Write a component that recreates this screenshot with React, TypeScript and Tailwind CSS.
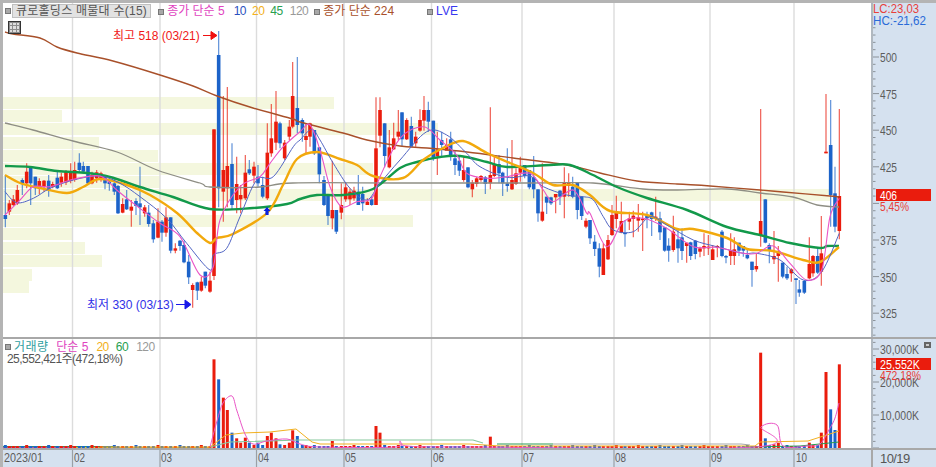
import React from "react";

type C = [number, "R" | "B", number, number, number, number];
type Candle = { x: number; up: boolean; top: number; bot: number; hi: number; lo: number };

const A: C[] = [
  [16,"B",285,297,165,322],[28,"R",250,275,240,285],[40,"R",238,255,225,258],[52,"R",210,250,195,255],[67,"B",180,190,175,225],
  [80,"R",155,190,130,205],[92,"B",140,190,140,255],[106,"B",170,205,170,225],[118,"R",183,207,175,222],[132,"R",182,200,180,215],
  [146,"B",182,210,165,230],[158,"R",192,200,185,205],[172,"B",173,205,150,207],[184,"R",170,188,158,200],[198,"R",153,187,150,195],
  [212,"R",155,183,130,190],[224,"R",150,180,125,185],[238,"B",128,150,100,155],[250,"B",138,155,125,160],[264,"B",138,190,138,192],
  [276,"R",165,190,155,193],[290,"R",157,175,150,188],[303,"R",160,180,155,185],[315,"B",168,190,165,208],[328,"B",185,192,170,212],
  [343,"B",190,215,175,225],[354,"B",198,280,195,282],[368,"R",252,278,235,280],[380,"B",238,268,210,270],[394,"R",260,272,240,320],
  [408,"B",243,258,235,285],[420,"B",250,262,140,315],[434,"R",262,280,255,290],[446,"B",278,312,255,320],[460,"B",310,358,300,368],
  [474,"R",305,353,265,355],[486,"B",305,338,300,365],[498,"R",292,338,262,350],[512,"B",292,392,292,400],[526,"R",385,392,370,400],
  [540,"B",362,378,360,392],[552,"B",375,427,362,430],[566,"B",425,472,405,492],[578,"R",495,510,490,563],[592,"B",487,512,485,540],
  [604,"R",485,512,470,515],[616,"B",455,497,455,505],[630,"R",482,515,455,518],[642,"R",28,468,28,480],[656,"B",-195,205,-267,262],
  [670,"R",150,215,-72,305],[682,"R",138,205,-99,262],[696,"B",132,255,70,268],[710,"R",192,240,110,280],[722,"R",225,238,195,280],
  [736,"R",158,235,105,240],[748,"B",148,160,120,165],[762,"R",140,167,125,190],[774,"B",170,190,135,200],[788,"B",195,230,170,235],
  [802,"R",98,235,10,240],[814,"R",55,100,-48,110],[828,"R",5,68,-87,90],[840,"B",10,70,5,85],[854,"R",68,115,60,120],
  [868,"R",20,50,0,60],[878,"R",-72,20,-174,25],[892,"B",-36,15,-189,40],
];
const B: C[] = [
  [7,"B",90,130,85,155],[18,"R",138,150,100,190],[30,"R",100,140,98,170],[43,"B",120,190,120,195],[58,"B",172,253,172,280],
  [72,"B",270,345,258,348],[84,"B",318,378,318,405],[97,"R",360,385,212,418],[109,"B",360,425,360,432],[124,"R",345,368,280,388],
  [137,"R",292,328,278,335],[150,"R",305,328,295,345],[162,"R",302,325,290,332],[175,"B",305,345,255,345],[188,"B",312,340,290,362],
  [202,"R",335,345,325,345],[215,"B",328,345,320,347],[228,"R",175,345,22,345],[240,"R",60,137,22,172],[254,"B",100,198,100,232],
  [268,"R",172,232,120,235],[281,"R",145,178,98,180],[295,"R",125,140,60,150],[306,"B",67,148,67,170],[320,"R",90,148,85,150],
  [334,"B",108,170,80,170],[347,"R",140,160,125,170],[360,"R",90,122,58,125],[372,"R",60,92,18,122],[385,"B",60,95,35,125],
  [400,"B",92,202,92,212],[412,"R",178,198,125,255],[425,"B",150,165,125,200],[440,"R",165,182,145,180],[452,"B",148,195,125,212],
  [465,"B",205,225,180,255],[478,"B",212,242,200,258],[491,"R",240,270,200,275],[504,"B",232,292,232,295],[517,"R",278,298,270,322],
  [530,"R",265,282,260,290],[543,"R",258,270,255,275],[556,"B",262,282,258,312],[571,"R",255,280,52,298],[583,"R",222,258,200,262],
  [597,"B",222,250,195,280],[608,"B",248,280,245,318],[622,"B",280,288,175,305],[636,"R",270,298,150,300],[648,"R",250,282,235,285],
  [661,"R",230,248,200,275],[674,"B",225,258,225,265],[688,"B",240,292,240,298],[701,"B",262,298,198,325],[714,"B",298,370,298,395],
  [727,"R",365,392,220,395],[740,"B",320,338,320,372],[753,"B",322,340,320,345],[767,"R",312,322,312,370],[780,"B",302,320,300,345],
  [793,"R",278,320,232,385],[806,"R",278,288,250,320],[818,"B",290,320,260,325],[832,"B",278,360,278,388],[845,"B",320,378,320,390],
  [858,"R",392,410,385,415],
];
const D9: C[] = [
  [90,"B",210,265,210,282],[104,"B",275,297,255,318],[118,"B",295,350,280,382],[130,"R",295,375,280,375],[144,"R",270,328,255,330],
  [156,"R",195,255,165,258],[169,"R",187,207,137,235],[184,"R",213,248,155,250],[195,"B",248,252,210,290],[208,"R",205,215,185,240],
  [220,"R",197,207,182,262],[235,"R",202,212,162,245],[248,"R",206,210,185,303],[261,"B",197,205,185,235],[275,"B",187,207,185,258],
  [287,"R",200,205,140,213],[300,"B",205,247,185,270],[314,"B",232,302,232,305],[326,"B",287,302,265,335],[340,"R",245,300,197,305],
  [354,"B",268,295,240,338],[366,"B",262,303,235,330],[380,"R",278,288,278,338],[392,"B",277,318,275,330],[406,"B",272,312,270,328],
  [420,"R",295,305,290,322],[432,"R",288,295,250,318],[445,"R",290,295,255,315],[458,"R",298,330,285,330],[472,"R",288,292,285,322],
  [486,"B",245,318,240,322],[498,"B",318,320,315,340],[512,"R",300,318,250,345],[523,"R",298,318,262,345],[537,"B",278,302,278,318],
  [550,"B",288,302,288,320],[562,"B",315,325,300,328],[576,"B",335,360,335,410],[589,"R",348,358,310,365],
];
const Z4: C[] = [
  [62,"R",303,345,-33,380],[76,"B",238,368,238,370],[88,"B",375,393,370,430],[102,"R",408,418,333,432],[115,"R",393,408,378,485],
  [128,"B",428,470,428,475],[141,"B",462,475,440,480],[154,"R",448,460,445,485],[168,"B",475,480,475,552],[178,"B",508,518,480,530],
  [193,"B",483,518,480,522],[208,"R",432,475,352,478],[219,"R",408,460,405,470],[233,"B",408,458,385,462],[244,"R",400,455,288,497],
  [258,"R",95,100,-78,100],[272,"B",75,225,-60,320],[285,"B",220,320,140,337],[298,"R",228,333,-33,358],
];

const conv = (rows: C[], ox: number, oy: number): Candle[] =>
  rows.map(([x, c, t, b, h, l]) => ({ x: ox + x / 3, up: c === "R", top: oy + t / 3, bot: oy + b / 3, hi: oy + h / 3, lo: oy + l / 3 }));

const candles: Candle[] = [...conv(A, 0, 120), ...conv(B, 300, 90), ...conv(D9, 560, 150), ...conv(Z4, 740, 120)];

type P = [number, number];
const zp = (pts: P[], ox: number, oy: number): P[] => pts.map(([x, y]) => [ox + x / 3, oy + y / 3]);
const line = (p: P[]) => p.map(([x, y]) => `${x.toFixed(1)},${y.toFixed(1)}`).join(" ");
const smooth = (p: P[]) => {
  let d = `M${p[0][0].toFixed(1)} ${p[0][1].toFixed(1)}`;
  for (let i = 0; i < p.length - 1; i++) {
    const p0 = p[Math.max(i - 1, 0)], p1 = p[i], p2 = p[i + 1], p3 = p[Math.min(i + 2, p.length - 1)];
    const c1x = p1[0] + (p2[0] - p0[0]) / 6, c1y = p1[1] + (p2[1] - p0[1]) / 6;
    const c2x = p2[0] - (p3[0] - p1[0]) / 6, c2y = p2[1] - (p3[1] - p1[1]) / 6;
    d += ` C${c1x.toFixed(1)} ${c1y.toFixed(1)} ${c2x.toFixed(1)} ${c2y.toFixed(1)} ${p2[0].toFixed(1)} ${p2[1].toFixed(1)}`;
  }
  return d;
};

const ma224: P[] = [[5,32],[13,34],[40,38],[57,47],[77,53],[113,61],[160,75],[193,86],[217,96],[253,108],[293,119],[300,122],[343,133],[367,140],[400,146],[427,148],[467,152],[513,158],[567,165],[600,173],[637,181],[677,184],[710,186],[760,190],[783,192],[830,196],[839,197]];
const ma120: P[] = [[5,123],[33,130],[73,141],[117,152],[157,170],[200,183],[210,187],[260,187],[293,183],[400,183],[533,183],[593,183],[643,189],[677,190],[727,189],[760,193],[793,197],[817,205],[839,207]];
const ma45: P[] = [[5,166],[30,167],[57,171],[87,173],[110,177],[140,187],[173,197],[210,209],[253,208],[287,204],[300,199],[317,195],[343,195],[373,189],[400,168],[417,162],[440,157],[460,156],[487,162],[507,167],[550,165],[570,165],[593,175],[617,187],[647,198],[687,210],[727,227],[760,235],[790,243],[820,248],[827,246],[839,246]];
const ma20: P[] = [[5,175],[20,183],[40,188],[67,193],[83,187],[100,179],[127,185],[150,195],[177,213],[197,233],[210,243],[217,238],[233,234],[267,213],[283,185],[297,159],[317,152],[340,159],[357,165],[373,176],[403,178],[423,160],[443,148],[463,141],[487,153],[510,163],[533,173],[553,185],[573,185],[590,195],[610,211],[647,215],[677,229],[693,229],[727,238],[747,249],[773,251],[803,260],[820,262],[839,247]];
const ma10: P[] = [
  ...zp([[15,215],[50,248],[100,235],[150,205],[220,180],[300,168],[360,190],[420,230],[500,295],[560,370],[630,450],[640,405],[680,385],[720,290],[770,180],[820,170],[880,80]], 0, 120),
  ...zp([[0,150],[35,118],[60,150],[100,220],[150,295],[200,330],[240,280],[300,210],[380,125],[440,135],[500,190],[540,230],[620,262],[690,258],[730,290],[800,315],[850,320]], 300, 90),
  ...zp([[100,150],[130,200],[160,240],[220,245],[270,200],[320,225],[400,270],[470,290],[550,310]], 560, 150),
  ...zp([[50,400],[120,420],[190,480],[245,455],[298,340]], 740, 120),
];
const ma5: P[] = [
  ...zp([[15,285],[60,240],[100,200],[150,200],[220,178],[300,168],[350,210],[400,250],[480,310],[540,350],[600,465],[640,440],[660,300],[720,200],[780,170],[810,130],[850,80]], 0, 120),
  ...zp([[0,125],[30,105],[60,180],[90,290],[125,350],[170,335],[215,325],[240,260],[300,145],[370,110],[420,150],[470,195],[500,250],[560,265],[620,260],[690,250],[730,300],[760,335],[820,300],[860,370]], 300, 90),
  ...zp([[90,190],[140,290],[190,215],[250,205],[320,235],[400,290],[470,292],[550,310]], 560, 150),
  ...zp([[50,400],[100,378],[150,430],[200,480],[245,450],[270,290],[298,235]], 740, 120),
];

const grid = [72.5, 160, 256.5, 344, 431.5, 522, 614, 710, 794];
const dates: [number, string][] = [[4,"2023/01"],[74,"02"],[161,"03"],[258,"04"],[345,"05"],[433,"06"],[523,"07"],[615,"08"],[711,"09"],[796,"10"]];
const rows: [number, number][] = [[97,334],[110,62],[123,438],[137,99],[150,158],[163,373],[176,160],[189,830],[202,90],[215,413],[228,73],[242,85],[255,102],[269,32],[281,29]];

const volTops: P[] = [
  ...zp([[642,85],[656,145],[670,200],[682,237],[696,305],[710,322],[722,335],[736,320],[748,335],[762,342],[775,335],[788,342],[802,315],[814,305],[828,322],[840,340],[854,342],[866,335],[878,298],[892,315]], 0, 330),
  ...zp([[36,87],[50,87],[62,90],[73,87],[127,75],[258,30],[270,50],[283,87],[600,62]], 290, 415),
  ...zp([[62,65],[76,322],[88,342],[102,340],[115,335],[128,345],[141,342],[154,345],[168,345],[208,335],[219,342],[233,342],[244,305],[258,123],[272,235],[285,297],[298,100]], 740, 330),
];
const volTop = (x: number, i: number) => {
  const m = volTops.find(([vx]) => Math.abs(vx - x) < 2.1);
  return m ? m[1] : 445 - (i % 5 === 0 ? 1 : 0);
};

const vPink: P[] = [[210,446],[217,420],[223,402],[232,395],[237,410],[245,433],[253,443],[267,440],[287,438],[300,443],[320,446],[395,446],[400,440],[407,445],[470,446],[755,446],[761,426],[777,424],[783,445],[807,445],[820,443],[830,427],[835,417],[839,402]];
const vOrange: P[] = [[100,446],[210,446],[226,434],[243,432],[270,431],[296,428],[312,441],[320,443],[470,443],[500,445],[755,445],[760,441],[808,440],[839,430]];
const vGreen: P[] = [[210,446],[230,441],[300,439],[473,439],[483,442]];
const vDark: P[] = [[497,443],[553,443]];
const vGray: P[] = [[553,443],[741,443],[750,444]];
const vDark2: P[] = [[745,446],[800,445],[839,441]];

const Sq = () => <span className="inline-block w-[6px] h-[6px] bg-[#a8a8a8] border border-[#777]" />;

function PriceChart() {
  return (
    <svg viewBox="3 3 868 334" className="block w-[868px] h-[334px]">
      {rows.map(([y, w]) => <rect key={y} x={3} y={y} width={w - 3} height={12} fill="#f4f7de" />)}
      {grid.map((x) => <line key={x} x1={x} x2={x} y1={3} y2={337} stroke="#dcdcdc" strokeWidth={1.4} />)}
      {candles.map((c, i) => {
        const col = c.up ? "#ea1c0d" : "#1c63c9";
        return (
          <g key={i}>
            <line x1={c.x} x2={c.x} y1={c.hi} y2={c.lo} stroke={col} strokeWidth={1.2} opacity={0.7} />
            <rect x={c.x - 1.8} y={c.top} width={3.6} height={Math.max(c.bot - c.top, 1.5)} fill={col} />
          </g>
        );
      })}
      <path d={smooth(ma224)} fill="none" stroke="#a8502a" strokeWidth={1.4} />
      <path d={smooth(ma120)} fill="none" stroke="#8e8e84" strokeWidth={1.3} />
      <path d={smooth(ma45)} fill="none" stroke="#12994a" strokeWidth={2.4} />
      <path d={smooth(ma20)} fill="none" stroke="#f2a90c" strokeWidth={2.4} />
      <path d={smooth(ma10)} fill="none" stroke="#5266c4" strokeWidth={1} />
      <path d={smooth(ma5)} fill="none" stroke="#ea55c6" strokeWidth={1.1} />
      <path d="M263.5 211 L267 207 L270.5 211 L268.6 211 L268.6 215 L265.4 215 L265.4 211 Z" fill="#0a22e0" />
      <path d="M203 35.5 H214 M211 31.5 L217 35.5 L211 39.5 Z" stroke="#f01010" strokeWidth={1} fill="#f01010" />
      <path d="M176 304.5 H187 M185 300 L191 304.5 L185 309 Z" stroke="#1818e8" strokeWidth={1} fill="#1818e8" />
    </svg>
  );
}

function VolumeChart() {
  return (
    <svg viewBox="3 338 868 109" className="block w-[868px] h-[109px]">
      {grid.map((x) => <line key={x} x1={x} x2={x} y1={338} y2={447} stroke="#dcdcdc" strokeWidth={1.4} />)}
      <rect x={3} y={445} width={110} height={1} fill="#28a060" />
      <rect x={3} y={446} width={70} height={1} fill="#d040b0" />
      <rect x={73} y={446} width={137} height={1} fill="#f2c030" />
      {candles.map((c, i) => {
        const t = volTop(c.x, i);
        return <rect key={i} x={c.x - 1.5} y={t} width={3} height={447 - t} fill={c.up ? "#ea1c0d" : "#1c63c9"} />;
      })}
      <polyline points={line(vGreen)} fill="none" stroke="#86c89c" strokeWidth={1.2} />
      <polyline points={line(vDark)} fill="none" stroke="#2a9a50" strokeWidth={1} />
      <polyline points={line(vGray)} fill="none" stroke="#a8a8a8" strokeWidth={1} />
      <polyline points={line(vDark2)} fill="none" stroke="#2a9a50" strokeWidth={1} />
      <polyline points={line(vOrange)} fill="none" stroke="#f2b020" strokeWidth={1} />
      <path d={smooth(vPink)} fill="none" stroke="#ea55c6" strokeWidth={1} />
    </svg>
  );
}

const priceY = (p: number) => 57 + (500 - p) * 1.464;
const numFont = { fontFamily: "'Liberation Sans', sans-serif" };

function PriceAxis() {
  const ticks: number[] = [];
  for (let p = 520; p >= 300; p -= 5) ticks.push(p);
  return (
    <svg viewBox="871 3 65 334" className="block w-[65px] h-[334px] overflow-visible" style={numFont}>
      <rect x={871} y={3} width={2} height={334} fill="#b0b8c0" />
      {ticks.map((p) => {
        const major = p % 25 === 0;
        return <line key={p} x1={873} x2={major ? 879 : 875.5} y1={priceY(p)} y2={priceY(p)} stroke="#8b9299" strokeWidth={1} />;
      })}
      {[500, 475, 450, 425, 375, 350, 325].map((p) => (
        <text key={p} x={880} y={priceY(p) + 5} fontSize={13} fill="#5c5c5c" textLength={17} lengthAdjust="spacingAndGlyphs">{p}</text>
      ))}
      <text x={873} y={13} fontSize={13} fill="#e8403a" textLength={46} lengthAdjust="spacingAndGlyphs">LC:23,03</text>
      <text x={873} y={25} fontSize={13} fill="#2a6ad8" textLength={53} lengthAdjust="spacingAndGlyphs">HC:-21,62</text>
      <rect x={876} y={189} width={55} height={12} fill="#ea1c0d" />
      <text x={880} y={199.5} fontSize={12.5} fill="#ffffff" textLength={17} lengthAdjust="spacingAndGlyphs">406</text>
      <text x={880} y={211} fontSize={13} fill="#e8403a" textLength={29} lengthAdjust="spacingAndGlyphs">5,45%</text>
    </svg>
  );
}

function VolumeAxis() {
  const t: number[] = [];
  for (let y = 447; y > 340; y -= 6.6) t.push(y);
  return (
    <svg viewBox="871 338 65 109" className="block w-[65px] h-[109px]" style={numFont}>
      <rect x={871} y={338} width={2} height={109} fill="#b0b8c0" />
      {t.map((y, i) => <line key={i} x1={873} x2={i % 5 === 0 ? 879 : 875.5} y1={y} y2={y} stroke="#8b9299" strokeWidth={1} />)}
      <text x={880} y={353} fontSize={13} fill="#5c5c5c" textLength={39} lengthAdjust="spacingAndGlyphs">30,000K</text>
      <text x={880} y={386} fontSize={13} fill="#5c5c5c" textLength={39} lengthAdjust="spacingAndGlyphs">20,000K</text>
      <text x={880} y={419} fontSize={13} fill="#5c5c5c" textLength={39} lengthAdjust="spacingAndGlyphs">10,000K</text>
      <rect x={876} y={357} width={55} height={12} fill="#ea1c0d" />
      <text x={880} y={367.5} fontSize={12.5} fill="#ffffff" textLength={40} lengthAdjust="spacingAndGlyphs">25,552K</text>
      <text x={880} y={379} fontSize={13} fill="#e8403a" textLength={41} lengthAdjust="spacingAndGlyphs">472,18%</text>
      <rect x={924} y={341} width={7} height={6} fill="#666" />
      <rect x={926} y={343} width={3} height={2} fill="#ccc" />
    </svg>
  );
}

function DateAxis() {
  return (
    <svg viewBox="3 449 868 17" className="block w-[868px] h-[17px]" style={numFont}>
      {grid.map((x) => <line key={x} x1={x} x2={x} y1={449} y2={466} stroke="#9aa0a6" strokeWidth={1.2} />)}
      {dates.map(([x, s]) => (
        <text key={s} x={x} y={461} fontSize={13} fill="#5c5c5c" textLength={s.length > 2 ? 39 : 11} lengthAdjust="spacingAndGlyphs">{s}</text>
      ))}
    </svg>
  );
}

export default function App() {
  const kr = "font-['Liberation_Sans','Noto_Sans_CJK_KR',sans-serif]";
  return (
    <div className={`w-[936px] h-[467px] bg-white overflow-hidden relative ${kr}`}>
      <div className="h-[3px] bg-[#b4b4b4]" />
      <div className="flex">
        <div className="w-[3px] bg-[#b4b4b4]" />
        <div className="w-[933px]">
          <div className="flex relative">
            <PriceChart />
            <div className="bg-[#d5e1ef] w-[65px]"><PriceAxis /></div>

            <div className="absolute left-[2px] top-[1px] flex items-center h-[14px] text-[12px] leading-none whitespace-nowrap">
              <Sq />
              <span className="ml-[1px] px-[3px] h-[14px] flex items-center bg-[#e2e2e2] border border-[#c0c0c0] text-[#555] tracking-[0.25px]">큐로홀딩스 매물대 수(15)</span>
              <span className="ml-[7px]"><Sq /></span>
              <span className="ml-[3px] text-[#e044c0]">종가 단순 5</span>
              <span className="ml-[9px] text-[#2a50c0] tracking-[-0.5px]">10</span>
              <span className="ml-[6px] text-[#f2b020] tracking-[-0.5px]">20</span>
              <span className="ml-[6px] text-[#28a050] tracking-[-0.5px]">45</span>
              <span className="ml-[7px] text-[#999] tracking-[-0.5px]">120</span>
              <span className="ml-[6px]"><Sq /></span>
              <span className="ml-[3px] text-[#a8502a]">종가 단순 224</span>
              <span className="ml-[33px]"><Sq /></span>
              <span className="ml-[3px] text-[#3838f0]">LVE</span>
            </div>
            <div className="absolute left-[5px] top-[18px] w-[13px] h-[13px] border border-[#333] bg-[#8c8c8c] grid grid-cols-3 gap-[1px] p-[1px]">
              {Array.from({ length: 9 }).map((_, i) => <span key={i} className="bg-[#dedede]" />)}
            </div>
            <span className="absolute left-[110px] top-[26px] text-[12px] leading-[14px] text-[#f01818] whitespace-nowrap">최고 518 (03/21)</span>
            <span className="absolute left-[84px] top-[295px] text-[12px] leading-[14px] text-[#3030e8] whitespace-nowrap">최저 330 (03/13)</span>
          </div>
          <div className="h-[2px] bg-[#a8a8a8]" />
          <div className="flex relative">
            <VolumeChart />
            <div className="bg-[#d5e1ef] w-[65px]"><VolumeAxis /></div>
            <div className="absolute left-[2px] top-[1px] flex items-center h-[14px] text-[12px] leading-none whitespace-nowrap">
              <Sq />
              <span className="ml-[3px] text-[#30a0a0] tracking-[0.4px]">거래량</span>
              <span className="ml-[8px] text-[#e044c0]">단순 5</span>
              <span className="ml-[8px] text-[#f2b020] tracking-[-0.5px]">20</span>
              <span className="ml-[7px] text-[#28a050] tracking-[-0.5px]">60</span>
              <span className="ml-[8px] text-[#999] tracking-[-0.5px]">120</span>
            </div>
            <span className="absolute left-[4px] top-[13px] text-[12px] leading-[14px] text-[#555] whitespace-nowrap tracking-[-0.55px]">25,552,421주(472,18%)</span>
          </div>
          <div className="h-[2px] bg-[#a8a8a8]" />
          <div className="flex bg-[#d5e1ef] h-[17px]">
            <DateAxis />
            <div className="w-[65px] border-l-2 border-[#a8a8a8] pl-[7px] text-[#555] text-[13px] leading-[17px] tracking-[-0.6px]">10/19</div>
          </div>
          <div className="h-[1px] bg-[#a8a8a8]" />
        </div>
      </div>
    </div>
  );
}
